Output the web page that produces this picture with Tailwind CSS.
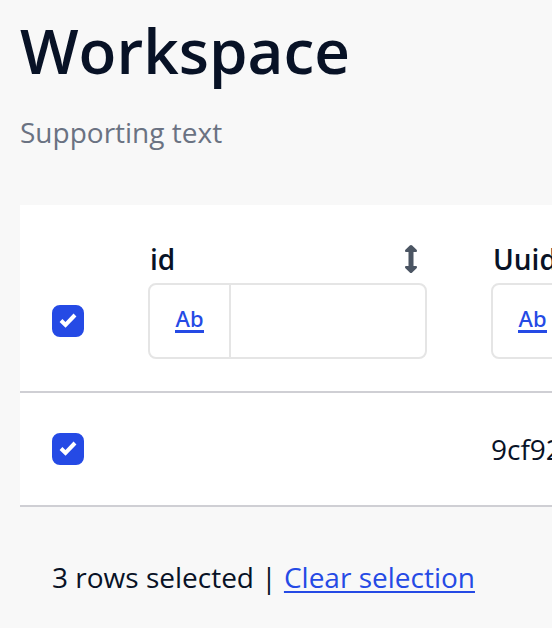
<!DOCTYPE html>
<html lang="en">
<head>
  <meta charset="UTF-8" />
  <meta name="viewport" content="width=device-width, initial-scale=1.0" />
  <title>Workspace</title>
  <script src="https://cdn.jsdelivr.net/npm/@tailwindcss/browser@4"></script>
</head>
<body class="min-h-screen overflow-x-hidden bg-[#f8f8f8] font-['Open_Sans','Noto_Sans',sans-serif] text-[28px] leading-[42px] text-[#081226]">

  <main class="pt-2 pl-5">
    <header>
      <h1 class="text-[62px] leading-[84px] font-semibold">Workspace</h1>
      <p class="mt-[19px] text-gray-500">Supporting text</p>
    </header>

    <div class="mt-[52px] overflow-hidden">
      <table class="w-[1000px] table-fixed border-separate border-spacing-0 bg-white text-left">
        <colgroup>
          <col class="w-24" />
          <col class="w-[343px]" />
          <col />
        </colgroup>
        <thead>
          <tr>
            <th class="border-b-2 border-[#cfcfd4] px-8 pb-[54px] align-bottom">
              <label class="grid size-8">
                <input type="checkbox" checked aria-label="Select all rows" class="col-start-1 row-start-1 size-8 appearance-none rounded-lg border-2 border-gray-300 checked:border-[#254ae5] checked:bg-[#254ae5]" />
                <svg class="pointer-events-none col-start-1 row-start-1 size-8" viewBox="0 0 32 32" fill="none" stroke="#fff" stroke-width="4"><path d="M9 15.5l4.500 4.500L23 10" /></svg>
              </label>
            </th>
            <th class="border-b-2 border-[#cfcfd4] px-8 pt-[33px] pb-8 font-semibold">
              <div class="mb-[3px] flex items-center justify-between pl-[2px]">
                <label for="filter-id">id</label>
                <button type="button" aria-label="Sort by id" class="flex w-8 justify-center">
                  <svg class="h-7 w-3" viewBox="0 0 12 28" fill="#4b5563"><path d="M6 0Q6.700 0 7.200.5L11.600 4.800Q12 5.300 12 6Q12 7 11 7H8.500V21H11Q12 21 12 22Q12 22.700 11.600 23.200L7.200 27.500Q6.700 28 6 28Q5.300 28 4.800 27.500L.4 23.200Q0 22.700 0 22Q0 21 1 21H3.500V7H1Q0 7 0 6Q0 5.300.4 4.800L4.800.5Q5.300 0 6 0Z" /></svg>
                </button>
              </div>
              <div class="flex h-19 overflow-hidden rounded-lg border-2 border-[#e5e5e5]">
                <button type="button" aria-label="Text filter" class="flex w-[79px] shrink-0 items-center justify-center pb-1">
                  <span class="border-b-[3px] border-[#254ae5] font-['Noto_Sans',sans-serif] text-[22px] leading-6 font-medium text-[#254ae5]">Ab</span>
                </button>
                <input id="filter-id" type="text" class="w-full min-w-0 border-l-2 border-[#e5e5e5] px-4 font-normal outline-none" />
              </div>
            </th>
            <th class="border-b-2 border-[#cfcfd4] px-8 pt-[33px] pb-8 font-semibold">
              <div class="mb-[3px] flex items-center justify-between pl-[2px]">
                <label for="filter-uuid">Uuid</label>
              </div>
              <div class="flex h-19 overflow-hidden rounded-lg border-2 border-[#e5e5e5]">
                <button type="button" aria-label="Text filter" class="flex w-[79px] shrink-0 items-center justify-center pb-1">
                  <span class="border-b-[3px] border-[#254ae5] font-['Noto_Sans',sans-serif] text-[22px] leading-6 font-medium text-[#254ae5]">Ab</span>
                </button>
                <input id="filter-uuid" type="text" class="w-full min-w-0 border-l-2 border-[#e5e5e5] px-4 font-normal outline-none" />
              </div>
            </th>
          </tr>
        </thead>
        <tbody>
          <tr>
            <td class="border-b-2 border-[#cfcfd4] px-8 py-10">
              <label class="grid size-8">
                <input type="checkbox" checked aria-label="Select row" class="col-start-1 row-start-1 size-8 appearance-none rounded-lg border-2 border-gray-300 checked:border-[#254ae5] checked:bg-[#254ae5]" />
                <svg class="pointer-events-none col-start-1 row-start-1 size-8" viewBox="0 0 32 32" fill="none" stroke="#fff" stroke-width="4"><path d="M9 15.500l4.500 4.500L23 10" /></svg>
              </label>
            </td>
            <td class="border-b-2 border-[#cfcfd4] px-8"></td>
            <td class="border-b-2 border-[#cfcfd4] px-8">9cf92</td>
          </tr>
        </tbody>
      </table>
    </div>

    <footer class="px-8 py-[49px]">
      <p>3 rows selected | <a href="#" class="text-[#254ae5] underline decoration-2 underline-offset-3">Clear selection</a></p>
    </footer>
  </main>

</body>
</html>
